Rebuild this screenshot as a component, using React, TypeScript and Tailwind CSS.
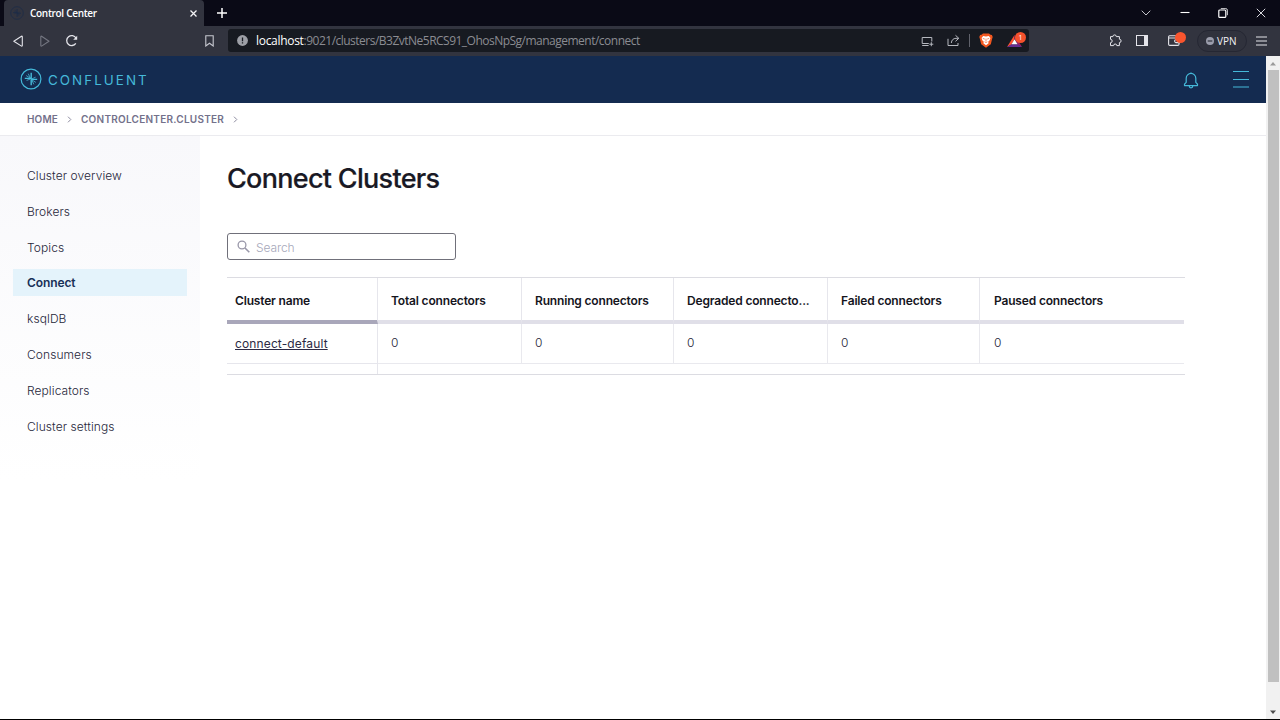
import React from "react";

const navItems = [
  { label: "Cluster overview" },
  { label: "Brokers" },
  { label: "Topics" },
  { label: "Connect", active: true },
  { label: "ksqlDB" },
  { label: "Consumers" },
  { label: "Replicators" },
  { label: "Cluster settings" },
];

const columns = [
  "Total connectors",
  "Running connectors",
  "Degraded connecto...",
  "Failed connectors",
  "Paused connectors",
];

const tableGrid = "grid grid-cols-[151px_144px_152px_154px_152px_204px]";

function ConfluentMark({ className }: { className: string }) {
  return (
    <svg viewBox="0 0 22 22" className={className} fill="none" stroke="currentColor">
      <circle cx="11" cy="11" r="9.9" strokeWidth="1.2" />
      <path d="M11.2 4.8v6.2M4.8 10.4h6.4M11.2 17.2v-6M17.2 11.4h-6" strokeWidth="1.4" />
      <path d="M6.2 7.6l4.2 2.6M8.2 5.7l2.2 4.3M6.6 12.4l3.8-1.4M15.8 14.4l-4-2.6M13.8 16.3l-2-4.3M15.6 9.2l-3.6 1.6" strokeWidth=".8" />
    </svg>
  );
}

function TabStrip() {
  return (
    <div className="flex h-[26px] bg-[#0a0a16] text-white">
      <div className="ml-1 flex h-[26px] w-[200px] items-center rounded-t-[4px] bg-[#32343f] pl-[6px] pr-[6px]">
        <ConfluentMark className="size-[14px] text-[#1c2c48]" />
        <span className="ml-[6px] flex-1 font-['Open_Sans','Noto_Sans',sans-serif] text-[10px] font-semibold tracking-[-0.3px]">Control Center</span>
        <svg className="size-[9px]" viewBox="0 0 9 9" stroke="#f4f4f6" strokeWidth="1.3"><path d="M1.5 1.5l6 6M7.5 1.5l-6 6" /></svg>
      </div>
      <svg className="ml-3 mt-[7px] size-3" viewBox="0 0 12 12" stroke="#fff" strokeWidth="1.5"><path d="M6 1v10M1 6h10" /></svg>
      <div className="ml-auto flex h-[26px] items-center">
        <svg className="mr-[29px] h-[6px] w-[10px]" viewBox="0 0 10 6" fill="none" stroke="#c4c4ca"><path d="M.7.7L5 5 9.3.7" /></svg>
        <svg className="mr-[28px] h-[10px] w-[10px]" viewBox="0 0 10 10" stroke="#fff" strokeWidth="1.1"><path d="M.5 4.5h9" /></svg>
        <svg className="mr-[28px] size-[10px]" viewBox="0 0 10 10" fill="none" stroke="#fff"><rect x=".8" y="2" width="7" height="7.4" rx="1" strokeWidth="1.2" /><path d="M2.8.6h5a1.6 1.6 0 0 1 1.6 1.6v5" strokeWidth=".8" /></svg>
        <svg className="mr-[14px] size-[10px]" viewBox="0 0 10 10" stroke="#d8d8de"><path d="M.8.8l8.4 8.4M9.2.8L.8 9.2" /></svg>
      </div>
    </div>
  );
}

function Toolbar() {
  return (
    <div className="flex h-[30px] items-center bg-[#32343f] pb-px">
      <svg className="ml-[13px] h-3 w-[10px]" viewBox="0 0 10 12" fill="none" stroke="#e4e4ea" strokeWidth="1.1" strokeLinejoin="round"><path d="M9.3 1.8v8.8q0 .8-.8.5L.8 6.2 8.5 1.2q.8-.3.8.6z" /></svg>
      <svg className="ml-[17px] h-3 w-[10px]" viewBox="0 0 10 12" fill="none" stroke="#747681" strokeWidth="1.1" strokeLinejoin="round"><path d="M.8 1.8v8.8q0 .8.8.5L9 6.2 1.6 1.2q-.8-.3-.8.6z" /></svg>
      <svg className="ml-[15px] size-[13px]" viewBox="0 0 13 13" fill="none" stroke="#e4e4ea" strokeWidth="1.3"><path d="M10.8 9.4A5 5 0 1 1 11 4" /><path d="M12.2 1.8v4H8.2z" fill="#e4e4ea" stroke="none" /></svg>
      <svg className="ml-[127px] h-3 w-[9px]" viewBox="0 0 9 12" fill="none" stroke="#c6c7cf" strokeWidth="1.1"><path d="M.8.8h7.4v10.2L4.5 8.3.8 11z" /></svg>
      <div className="ml-[14px] flex h-[23px] w-[801px] items-center rounded-[3px] bg-[#171a21] pl-[9px]">
        <svg className="size-[11px]" viewBox="0 0 11 11"><circle cx="5.5" cy="5.5" r="5.4" fill="#9d9fa6" /><path d="M5.5 2.6v3.6M5.5 7.3v1.3" stroke="#171a21" strokeWidth="1.3" /></svg>
        <span className="ml-[8px] w-[660px] whitespace-nowrap font-['Open_Sans','Noto_Sans',sans-serif] text-[12px] leading-[22px] tracking-[-0.51px] text-[#8b8c92]"><span className="tracking-[-0.3px] text-white">localhost</span>:9021/clusters/B3ZvtNe5RCS91_OhosNpSg/management/connect</span>
        <svg className="ml-[5px] h-3 w-[13px] shrink-0" viewBox="0 0 13 12" fill="none" stroke="#b6b8bf"><path d="M7.8 8.5H1.2V2.5h9.6v4M1.2 10.5h6.4M10.3 7.2v4M8.3 9.2h4" /></svg>
        <svg className="ml-[13px] h-[13px] w-[13px] shrink-0" viewBox="0 0 13 13" fill="none" stroke="#b6b8bf"><path d="M1 4.8v6.7h10V9M8.5 1.3l3.3 3-3.3 3M11.6 4.3H9Q4.8 4.5 4.3 9" /></svg>
        <span className="ml-[9px] h-[13px] w-px shrink-0 bg-[#60626b]" />
        <svg className="ml-[9px] h-[15px] w-[14px] shrink-0" viewBox="0 0 14 15"><path d="M4 .5h6l1.5 1.3 1.4.1.8 2.2-.5 1.3-1.4 5.8L7 14.8l-4.8-3.6L.8 5.4.3 4.1l.8-2.2 1.4-.1z" fill="#f2571f" /><path d="M4.2 3L7 3.4 9.8 3l1.6 2-.7 2.2-1.5 1.5.4 1.5L7 12.3l-2.6-2.1.4-1.5-1.5-1.5L2.6 5z" fill="#fff" /><path d="M3.8 5.4l2 .7M10.2 5.4l-2 .7M7 5.6v2.6M5.6 8.8L7 9.5l1.4-.7" stroke="#f2571f" strokeWidth=".7" fill="none" /></svg>
        <div className="relative ml-[14px] h-[15px] w-[20px] shrink-0">
          <svg className="h-[15px] w-4" viewBox="0 0 16 15"><path d="M7.5 2L0 14l4.5-2.6L7.5 6z" fill="#ff5130" /><path d="M7.5 2L15 14l-4.5-2.6L7.5 6z" fill="#9e1f63" /><path d="M0 14h15l-4.4-2.7H4.4z" fill="#662d91" /><path d="M7.5 6.2l3 5.1h-6z" fill="#fff" /></svg>
          <span className="absolute -top-px left-[8px] flex h-[11px] w-[11px] items-center justify-center rounded-full bg-[#f4512c] font-['Open_Sans',sans-serif] text-[7px] leading-none text-white">1</span>
        </div>
      </div>
      <svg className="ml-[80px] h-[13px] w-[13px]" viewBox="0 0 13 13" fill="none" stroke="#e4e4ea" strokeWidth="1"><path d="M1.5 2.6h2.4a1.7 1.7 0 0 1 3.4 0h3.1v2.6a1.7 1.7 0 0 1 0 3.4v3H7.8a1.6 1.6 0 0 0-3.2 0H1.5V8.7a1.7 1.7 0 0 0 0-3.4z" /></svg>
      <svg className="ml-[14px] h-[11px] w-3" viewBox="0 0 12 11"><rect x=".5" y=".5" width="11" height="10" fill="none" stroke="#e4e4ea" /><path d="M8 0h4v11H8z" fill="#e4e4ea" /></svg>
      <div className="relative ml-[20px] h-[11px] w-[18px]">
        <svg className="h-[11px] w-3" viewBox="0 0 12 11" fill="none" stroke="#e4e4ea" strokeWidth="1.1"><path d="M11 3.2V2Q11 .8 9.8.8H1.6Q.6.8.6 1.8v7.4q0 1.2 1.2 1.2h8q1.2 0 1.2-1.2V8M.8 3h10.4M11.4 4.8H7.7Q6.6 4.8 6.6 6T7.7 7.6h3.7z" /></svg>
        <span className="absolute left-[7px] -top-[3px] size-[11px] rounded-full bg-[#f9552e]" />
      </div>
      <div className="ml-[11px] flex h-[22px] w-[50px] items-center rounded-full border border-[#252733] bg-[#30323d] pl-2">
        <svg className="size-2 shrink-0" viewBox="0 0 8 8"><circle cx="4" cy="4" r="4" fill="#9b9dac" /><path d="M1.7 4h4.6" stroke="#32343f" strokeWidth="1.2" /></svg>
        <span className="ml-[3px] font-['Open_Sans','Noto_Sans',sans-serif] text-[10px] leading-none text-[#f0f0f4]">VPN</span>
      </div>
      <svg className="ml-[9px] h-[10px] w-[11px]" viewBox="0 0 11 10" stroke="#e4e4ea" strokeWidth="1.1"><path d="M0 1h11M0 5h11M0 9h11" /></svg>
    </div>
  );
}

function Header() {
  return (
    <header className="flex h-[47px] items-center bg-[#142b50] pb-px text-[#45b9d9]">
      <ConfluentMark className="ml-[20px] size-[22px]" />
      <span className="ml-[6px] pt-[3px] font-['Inter',sans-serif] text-[13.4px] leading-none font-normal tracking-[2.05px]">CONFLUENT</span>
      <svg className="ml-auto mt-[2px] h-[17px] w-4" viewBox="0 0 16 17" fill="none" stroke="currentColor" strokeWidth="1.2" strokeLinejoin="round"><path d="M7 1.9Q8 .4 9 1.9M3.2 10.3V6.2a4.8 4.8 0 0 1 9.6 0v4.1l1.7 1.9v1.4h-13v-1.4zM6.2 14a1.8 1.8 0 0 0 3.6 0" /></svg>
      <svg className="ml-[34px] mr-[17px] h-[18px] w-4" viewBox="0 0 16 18" stroke="currentColor" strokeWidth="1.2"><path d="M0 1.5h16M0 9.5h16M0 17h16" /></svg>
    </header>
  );
}

function Chevron() {
  return <svg className="h-[7px] w-[5px]" viewBox="0 0 5 7" fill="none" stroke="#8c8b9f" strokeWidth="1"><path d="M1 .7l2.8 2.8L1 6.3" /></svg>;
}

function Breadcrumbs() {
  return (
    <div className="flex h-[33px] items-center border-b border-[#ebebef] bg-white pl-[27px] text-[10px] font-semibold text-[#73718b]">
      <span className="w-[31px] whitespace-nowrap tracking-[0.15px]">HOME</span>
      <span className="ml-[9px] w-[14px]"><Chevron /></span>
      <span className="w-[143px] whitespace-nowrap tracking-[0.25px]">CONTROLCENTER.CLUSTER</span>
      <span className="ml-[9px]"><Chevron /></span>
    </div>
  );
}

function Sidebar() {
  return (
    <nav className="flex h-[345px] w-[200px] shrink-0 flex-col gap-[8.8px] bg-linear-to-b from-[#f8f8fb] to-white px-[13px] pt-[26px]">
      {navItems.map((item) => (
        <a
          key={item.label}
          className={
            item.active
              ? "flex h-[27px] shrink-0 items-center bg-[#e4f3fb] pl-[14px] text-[12px] font-semibold tracking-[-0.1px] text-[#173057]"
              : "flex h-[27px] shrink-0 items-center pt-[0.9px] pl-[14px] text-[12px] font-light tracking-[0.08px] text-[#26263a]"
          }
        >
          {item.label}
        </a>
      ))}
    </nav>
  );
}

function ConnectTable() {
  return (
    <div className="mt-[17px] w-[958px] border-y border-[#dcdce2]">
      <div className={`${tableGrid} h-[46px] text-[12px] font-semibold tracking-[-0.17px] text-[#15151d]`}>
        <div className="flex items-center border-r border-b-4 border-r-[#e6e6ec] border-b-[#a9a7ba] pt-[3px] pl-2">Cluster name</div>
        {columns.map((name, i) => (
          <div key={name} className={i === 4 ? "flex items-center border-b-4 border-b-[#e0dfe8] pt-[3px] pl-[14px]" : "flex items-center whitespace-nowrap border-r border-b-4 border-r-[#e6e6ec] border-b-[#e0dfe8] pt-[3px] pl-[13px]"}>{name}</div>
        ))}
      </div>
      <div className={`${tableGrid} h-10 text-[12px]`}>
        <div className="flex items-center border-r border-b border-[#e6e6ec] pl-2 text-[#2d2a44]">
          <a className="tracking-[0.13px] underline underline-offset-1">connect-default</a>
        </div>
        {columns.map((name, i) => (
          <div key={name} className={i === 4 ? "flex items-center border-b border-[#e9e9ee] pb-[2px] pl-[14px] font-light text-[#26263a]" : "flex items-center border-r border-b border-[#e9e9ee] pb-[2px] pl-[13px] font-light text-[#26263a]"}>0</div>
        ))}
      </div>
      <div className="h-[10px] w-[151px] border-r border-[#e6e6ec]" />
    </div>
  );
}

function Scrollbar() {
  return (
    <div className="flex w-[14px] shrink-0 flex-col items-center bg-[#f1f1f1]">
      <svg className="h-[14px] w-[14px]" viewBox="0 0 14 14"><path d="M4 9.5L7 6l3 3.5z" fill="#9b9b9b" /></svg>
      <div className="ml-px h-[612px] w-[11px] bg-[#c0c0c0]" />
      <svg className="mt-auto h-[14px] w-[14px]" viewBox="0 0 14 14"><path d="M4 5.5h6L7 9z" fill="#4c4c4c" /></svg>
    </div>
  );
}

export default function App() {
  return (
    <div className="flex h-[720px] w-[1280px] flex-col overflow-hidden bg-white font-['Inter','Liberation_Sans',sans-serif]">
      <TabStrip />
      <Toolbar />
      <div className="flex min-h-0 flex-1">
        <div className="flex min-w-0 flex-1 flex-col">
          <Header />
          <Breadcrumbs />
          <div className="flex flex-1">
            <Sidebar />
            <main className="flex-1 pl-[27px] pt-[27px]">
              <h1 className="text-[27px] leading-8 font-medium tracking-[-0.7px] text-[#191924] [-webkit-text-stroke:0.2px_#191924]">Connect Clusters</h1>
              <div className="mt-[38px] flex h-[27px] w-[229px] items-center rounded-[3px] border border-[#70707a] pl-[9px]">
                <svg className="size-[13px]" viewBox="0 0 13 13" fill="none" stroke="#9896a8" strokeWidth="1.3"><circle cx="5" cy="5" r="3.9" /><path d="M8 8l4.3 4.2" strokeWidth="1.6" /></svg>
                <span className="ml-[6px] pt-[2px] text-[12px] font-light tracking-[-0.1px] text-[#a6a8ba]">Search</span>
              </div>
              <ConnectTable />
            </main>
          </div>
        </div>
        <Scrollbar />
      </div>
      <div className="h-px shrink-0 bg-black" />
    </div>
  );
}
